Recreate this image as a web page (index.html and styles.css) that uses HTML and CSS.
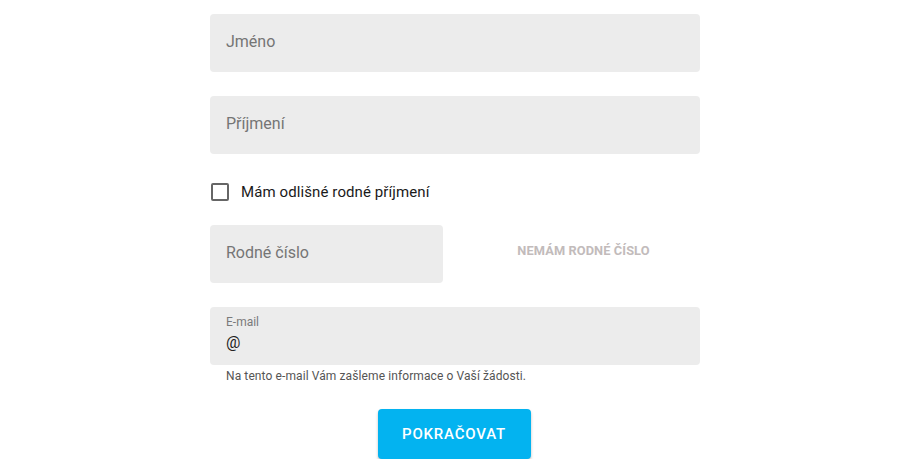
FILE: index.html
```html
<!DOCTYPE html>
<html lang="cs">
<head>
<meta charset="utf-8">
<link rel="stylesheet" href="styles.css">
</head>
<body>
<form class="form">
  <div class="field"><span class="placeholder">Jméno</span></div>
  <div class="field field-gap"><span class="placeholder">Příjmení</span></div>
  <label class="check">
    <span class="box"></span>
    <span class="check-label">Mám odlišné rodné příjmení</span>
  </label>
  <div class="row">
    <div class="field field-half"><span class="placeholder">Rodné číslo</span></div>
    <div class="link-wrap"><span class="link">NEMÁM RODNÉ ČÍSLO</span></div>
  </div>
  <div class="field field-email">
    <span class="float-label">E-mail</span>
    <span class="value">@</span>
  </div>
  <div class="helper">Na tento e-mail Vám zašleme informace o Vaší žádosti.</div>
  <div class="actions"><button type="button" class="btn">POKRAČOVAT</button></div>
</form>
</body>
</html>
```

FILE: styles.css
```css
html, body {
  margin: 0;
  padding: 0;
  background: #ffffff;
  font-family: Roboto, "Liberation Sans", sans-serif;
}
.form {
  width: 490px;
  margin-left: 210px;
  padding-top: 14px;
  display: flex;
  flex-direction: column;
}
.field {
  box-sizing: border-box;
  height: 58px;
  background: #ececec;
  border-radius: 4px;
  padding: 0 16px 3px;
  display: flex;
  align-items: center;
}
.field-gap {
  margin-top: 24px;
}
.placeholder {
  font-size: 16px;
  color: #757575;
}
.check {
  display: flex;
  align-items: center;
  margin-top: 28px;
  height: 20px;
}
.box {
  box-sizing: border-box;
  width: 18px;
  height: 18px;
  border: 2px solid #666666;
  border-radius: 2px;
  margin-left: 1px;
}
.check-label {
  margin-left: 12px;
  font-size: 15px;
  letter-spacing: 0.1px;
  color: #1a1a1a;
}
.row {
  display: flex;
  margin-top: 23px;
}
.field-half {
  width: 233px;
}
.link-wrap {
  flex: 1;
  display: flex;
  align-items: center;
  justify-content: center;
  padding: 0 0 8px 24px;
}
.link {
  font-size: 12.8px;
  font-weight: 700;
  color: #c2bbbb;
  letter-spacing: 0.1px;
}
.field-email {
  margin-top: 24px;
  flex-direction: column;
  align-items: flex-start;
  justify-content: flex-start;
  padding-top: 7px;
}
.float-label {
  font-size: 12px;
  color: #7a7a7a;
  line-height: 16px;
}
.value {
  font-size: 16px;
  color: #222222;
  line-height: 20px;
  margin-top: 3px;
}
.helper {
  font-size: 12px;
  letter-spacing: 0.1px;
  color: #555555;
  margin-top: 3px;
  padding-left: 16px;
  line-height: 16px;
}
.actions {
  display: flex;
  justify-content: center;
  margin-top: 25px;
  padding-right: 2px;
}
.btn {
  width: 153px;
  height: 50px;
  border: none;
  border-radius: 4px;
  background: #03b3f0;
  color: #ffffff;
  font-family: Roboto, "Liberation Sans", sans-serif;
  font-size: 15px;
  font-weight: 500;
  letter-spacing: 0.8px;
  box-shadow: 0 2px 3px rgba(0, 0, 0, 0.25);
}
```
